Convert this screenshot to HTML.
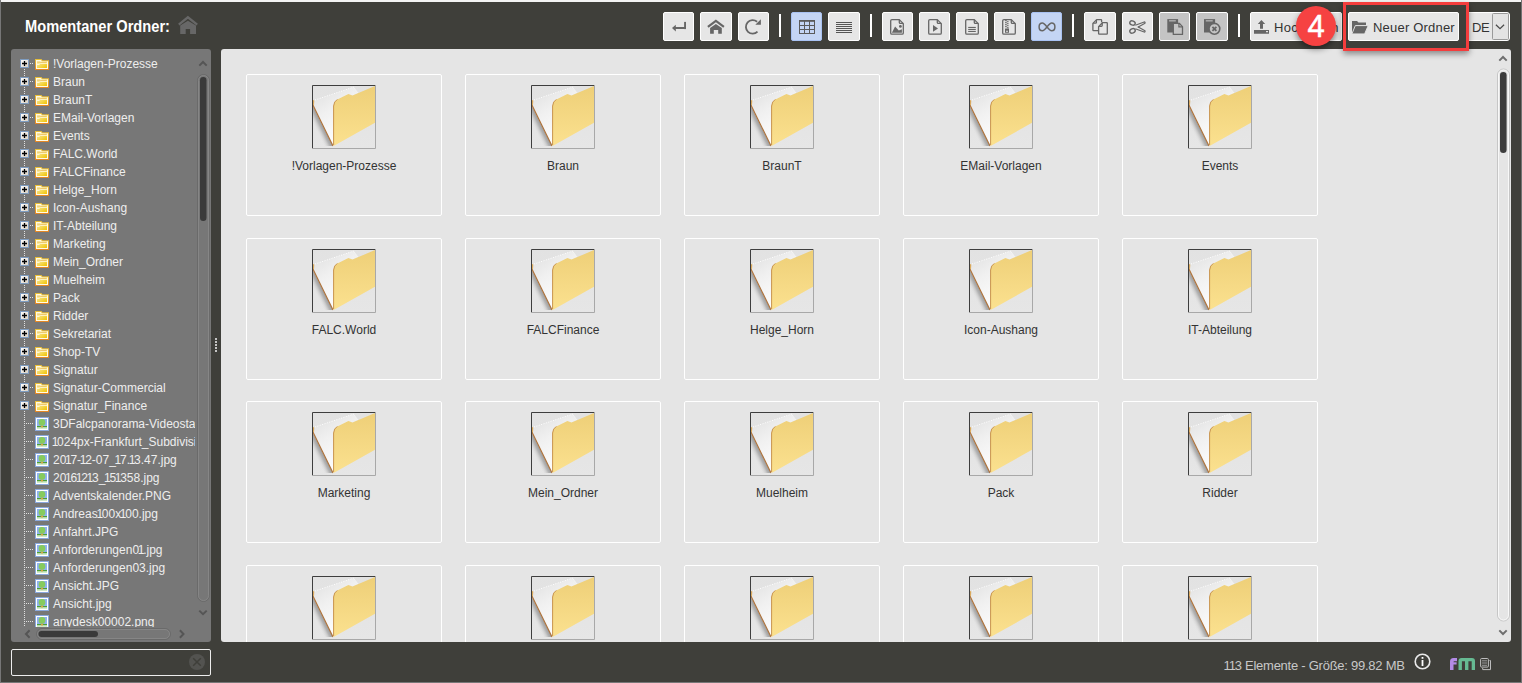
<!DOCTYPE html><html><head><meta charset="utf-8"><style>
*{margin:0;padding:0;box-sizing:border-box}
html,body{width:1522px;height:683px;overflow:hidden;background:#3f3f3a;font-family:"Liberation Sans",sans-serif}
.a{position:absolute}
.btn{position:absolute;top:12px;height:29px;width:31px;background:#e6e6e6;border:1px solid #fff;border-radius:2px}
.btn svg{position:absolute;left:0;top:0}
.on{background:#c4d5f4;border-color:#a9c2f2}
.dis{background:#c4c4c4}
.sep{position:absolute;top:14px;width:2px;height:23px;background:#fff}
.tr{position:absolute;left:53px;font-size:12px;color:#eeeeee;white-space:nowrap;line-height:18px;height:18px}
.item{position:absolute;width:196px;height:142px;border:1px solid #fff;border-radius:2px}
.lbl{position:absolute;left:0;width:194px;top:84px;text-align:center;font-size:12px;color:#333;line-height:14px}
.ico{position:absolute;left:65px;top:10px;width:64px;height:64px}
</style></head><body><svg width="0" height="0" style="position:absolute"><defs>
<linearGradient id="fy" x1="0" y1="0" x2="0" y2="1"><stop offset="0" stop-color="#eecf78"/><stop offset="1" stop-color="#fbe18f"/></linearGradient>
<linearGradient id="fw" x1="0" y1="0" x2="0.5" y2="1"><stop offset="0" stop-color="#dedede"/><stop offset="0.45" stop-color="#f0f0f0"/><stop offset="1" stop-color="#ffffff"/></linearGradient>
<linearGradient id="fsh" gradientUnits="userSpaceOnUse" x1="11" y1="40.5" x2="3.5" y2="44.2"><stop offset="0" stop-color="#999"/><stop offset="0.35" stop-color="#b4b4b4"/><stop offset="1" stop-color="#e4e4e4" stop-opacity="0"/></linearGradient>
<linearGradient id="fbg" x1="0" y1="0" x2="0" y2="1"><stop offset="0" stop-color="#e2e2e2"/><stop offset="1" stop-color="#e6e6e6"/></linearGradient>
<linearGradient id="tfo" x1="0" y1="0" x2="0" y2="1"><stop offset="0" stop-color="#e8c23a"/><stop offset="1" stop-color="#e48424"/></linearGradient>
<linearGradient id="tfi" x1="0" y1="0" x2="1" y2="1"><stop offset="0" stop-color="#faeeb0"/><stop offset="1" stop-color="#f0c400"/></linearGradient>
</defs></svg>
<div class="a" style="left:0;top:0;width:1522px;height:2px;background:#f3f3f3"></div>
<div class="a" style="left:0;top:0;width:1px;height:683px;background:#777"></div>
<div class="a" style="left:1521px;top:0;width:1px;height:683px;background:#727272"></div>
<div class="a" style="left:0;top:682px;width:1522px;height:1px;background:#777"></div>
<div class="a" style="left:24.8px;top:17.3px;font-size:15.8px;font-weight:bold;color:#fff;line-height:20px;white-space:nowrap;transform:scaleX(0.928);transform-origin:0 0">Momentaner Ordner:</div>
<svg class="a" style="left:177px;top:15px" width="22" height="19" viewBox="0 0 22 19"><path d="M1.8 9.6 L10.9 2.3 L20.2 9.6" stroke="#676767" stroke-width="2.3" fill="none"/><path d="M3.2 10.6 L10.9 5.8 L19 10.6 V19 H13.1 V14 H8.7 V19 H3.2 Z" fill="#676767"/></svg>
<div class="btn " style="left:663px;width:31px"></div>
<div class="btn " style="left:700px;width:32px"></div>
<div class="btn " style="left:738px;width:31px"></div>
<div class="sep" style="left:779px"></div>
<div class="btn on" style="left:791px;width:31px"></div>
<div class="btn " style="left:828px;width:32px"></div>
<div class="sep" style="left:870px"></div>
<div class="btn " style="left:882px;width:31px"></div>
<div class="btn " style="left:919px;width:31px"></div>
<div class="btn " style="left:956px;width:32px"></div>
<div class="btn " style="left:994px;width:31px"></div>
<div class="btn on" style="left:1031px;width:31px"></div>
<div class="sep" style="left:1072px"></div>
<div class="btn " style="left:1084px;width:32px"></div>
<div class="btn " style="left:1122px;width:31px"></div>
<div class="btn dis" style="left:1159px;width:31px"></div>
<div class="btn dis" style="left:1196px;width:32px"></div>
<div class="sep" style="left:1238px"></div>
<div class="btn" style="left:1250px;width:92px"></div>
<div class="a" style="left:1274px;top:20px;font-size:13px;color:#333;line-height:15px;letter-spacing:0.3px">Hochladen</div>
<div class="btn" style="left:1348px;width:111px"></div>
<div class="a" style="left:1373px;top:20px;font-size:13px;color:#333;line-height:15px;letter-spacing:0.2px">Neuer Ordner</div>
<div class="btn" style="left:1466px;width:44px;border-radius:3px"></div>
<div class="a" style="left:1472px;top:20px;font-size:13px;color:#333;line-height:15px;letter-spacing:-0.4px">DE</div>
<div class="a" style="left:1492px;top:13px;width:16.5px;height:26.5px;border:1px solid #9a9a9a;border-radius:1.5px;background:#e3e3e3"></div>
<svg class="a" style="left:1495px;top:23px" width="11" height="8" viewBox="0 0 11 8"><path d="M0.9 1.7 L5 5.6 L9.1 1.7" stroke="#4a4a4a" stroke-width="1.2" fill="none"/></svg>
<svg class="a" style="left:0;top:0" width="1522" height="50" viewBox="0 0 1522 50">
<g fill="#666" stroke="none">
<!-- enter -->
<rect x="684.1" y="21.9" width="1.9" height="7.2"/>
<rect x="674.5" y="27" width="11.5" height="2"/>
<path d="M672 28.1 L675.8 24.8 L675.8 31.5 Z"/>
<!-- home -->
<path d="M707.9 26.9 L715.9 20.8 L723.9 26.9" fill="none" stroke="#666" stroke-width="2.1"/>
<path d="M710.1 27.9 L715.9 24.1 L721.8 27.9 L721.8 33.8 L718.2 33.8 L718.2 29.9 L713.8 29.9 L713.8 33.8 L710.1 33.8 Z"/>
<!-- refresh -->
<path d="M757.1 21.7 A6.8 6.8 0 1 0 757.5 31.7" fill="none" stroke="#666" stroke-width="1.8"/>
<path d="M755.3 24.7 L760.9 24.7 L760.9 19.2 Z"/>
<!-- grid -->
<g fill="none" stroke="#5a5a5a" stroke-width="1">
<rect x="799.5" y="20.5" width="15" height="13"/>
<path d="M804.5 21V33M809.5 21V33M800 25.5H814M800 29.5H814"/>
</g>
<rect x="799" y="20" width="16" height="1.8" fill="#5a5a5a"/>
<!-- list -->
<g fill="#555">
<rect x="836" y="22" width="16" height="1"/><rect x="836" y="24" width="16" height="1"/><rect x="836" y="26" width="16" height="1"/><rect x="836" y="28" width="16" height="1"/><rect x="836" y="30" width="16" height="1"/><rect x="836" y="32" width="16" height="1"/>
</g>
</g>
<g fill="none" stroke="#666" stroke-width="1.3" stroke-linejoin="round">
<!-- image doc -->
<path d="M891.9 19.6 H899.3 L903.3 23.6 V33 Q903.3 34.2 902.1 34.2 H891.9 Q890.7 34.2 890.7 33 V20.8 Q890.7 19.6 891.9 19.6 Z"/>
<path d="M899.3 19.8 V22.4 Q899.3 23.4 900.3 23.4 H903.1"/>
<!-- video doc -->
<path d="M929.9 19.6 H937.3 L941.3 23.6 V33 Q941.3 34.2 940.1 34.2 H929.9 Q928.7 34.2 928.7 33 V20.8 Q928.7 19.6 929.9 19.6 Z"/>
<path d="M937.3 19.8 V22.4 Q937.3 23.4 938.3 23.4 H941.1"/>
<!-- text doc -->
<path d="M966.9 19.6 H974.3 L978.3 23.6 V33 Q978.3 34.2 977.1 34.2 H966.9 Q965.7 34.2 965.7 33 V20.8 Q965.7 19.6 966.9 19.6 Z"/>
<path d="M974.3 19.8 V22.4 Q974.3 23.4 975.3 23.4 H978.1"/>
<!-- zip doc -->
<path d="M1003.9 19.6 H1011.3 L1015.3 23.6 V33 Q1015.3 34.2 1014.1 34.2 H1003.9 Q1002.7 34.2 1002.7 33 V20.8 Q1002.7 19.6 1003.9 19.6 Z"/>
<path d="M1011.3 19.8 V22.4 Q1011.3 23.4 1012.3 23.4 H1015.1"/>
<!-- infinity -->
<path d="M1047 26.9 C1045 24.5 1043.8 23.1 1042.4 23.1 C1040.3 23.1 1039.1 24.8 1039.1 26.9 C1039.1 29 1040.3 30.7 1042.4 30.7 C1043.8 30.7 1045 29.3 1047 26.9 C1049 24.5 1050.2 23.1 1051.6 23.1 C1053.7 23.1 1054.9 24.8 1054.9 26.9 C1054.9 29 1053.7 30.7 1051.6 30.7 C1050.2 30.7 1049 29.3 1047 26.9 Z" stroke-width="1.5"/>
<!-- copy -->
<path d="M1101.6 22.2 V20.2 Q1101.6 19.6 1101 19.6 H1096.6 L1092.9 23.4 V30.1 Q1092.9 30.7 1093.5 30.7 H1098"/>
<path d="M1096.4 19.9 V22.4 Q1096.4 23.2 1095.6 23.2 H1093.1"/>
<path d="M1102.4 22.7 H1106.7 Q1107.3 22.7 1107.3 23.3 V33.6 Q1107.3 34.2 1106.7 34.2 H1099.2 Q1098.6 34.2 1098.6 33.6 V26.6 Z"/>
<path d="M1102.2 23 V25.5 Q1102.2 26.3 1101.4 26.3 H1098.9"/>
<!-- scissors -->
<ellipse cx="1132.5" cy="23" rx="2.8" ry="2.1" transform="rotate(22 1132.5 23)" stroke-width="1.4"/>
<ellipse cx="1132.5" cy="30.9" rx="2.8" ry="2.1" transform="rotate(-22 1132.5 30.9)" stroke-width="1.4"/>
<path d="M1135.3 25.3 L1144.2 21.9 Q1145.5 22.2 1145 23.2 L1137.8 27.3" stroke-width="1.1"/>
<path d="M1135.3 28.7 L1144.2 32.1 Q1145.5 31.8 1145 30.8 L1137.8 26.7" stroke-width="1.1"/>
</g>
<g fill="#666">
<!-- image doc details -->
<path d="M891.9 32.8 L895.1 26.5 L898.8 30.6 L901.9 29.2 L901.9 32.8 Z"/>
<circle cx="900.4" cy="26.4" r="1.4"/>
<!-- play -->
<path d="M933 25.1 L933 31.8 L938 28.4 Z"/>
<!-- text lines -->
<rect x="968.2" y="26.9" width="7.6" height="1.1"/><rect x="968.2" y="28.9" width="7.6" height="1.1"/><rect x="968.2" y="30.9" width="7.6" height="1.1"/>
<!-- zipper -->
<rect x="1005" y="20.2" width="1.8" height="1"/><rect x="1006.8" y="21.2" width="1.8" height="1"/><rect x="1005" y="22.2" width="1.8" height="1"/><rect x="1006.8" y="23.2" width="1.8" height="1"/><rect x="1005" y="24.2" width="1.8" height="1"/><rect x="1006.8" y="25.2" width="1.8" height="1"/><rect x="1005" y="26.2" width="1.8" height="1"/><rect x="1006.8" y="27.2" width="1.8" height="1"/>
<path d="M1005 28.4 H1009 V32.7 H1005 Z M1006 30.8 V31.8 H1008 V30.8 Z" fill-rule="evenodd"/>
<!-- paste -->
<rect x="1167.3" y="19.1" width="10.8" height="13.4"/>
<rect x="1169.1" y="20.3" width="6.7" height="1.1" fill="#c4c4c4"/>
<path d="M1173.3 23.3 H1179.2 L1182.5 26.6 V34.4 H1173.3 Z" fill="#c4c4c4" stroke="#666" stroke-width="1.3" stroke-linejoin="round"/>
<path d="M1178.9 23.5 V26.9 H1182.3" fill="none" stroke="#666" stroke-width="1.2"/>
<!-- clear -->
<rect x="1204" y="19.1" width="11.1" height="13.4"/>
<rect x="1205.8" y="20.3" width="6.9" height="1.1" fill="#c4c4c4"/>
<circle cx="1214.4" cy="28.8" r="5.4" fill="#c4c4c4" stroke="#666" stroke-width="1.6"/>
<path d="M1212.4 26.8 L1216.4 30.8 M1216.4 26.8 L1212.4 30.8" stroke="#666" stroke-width="1.8"/>
<!-- upload -->
<path d="M1261.4 19.9 L1265.2 23.9 L1263 23.9 L1263 28.7 L1260 28.7 L1260 23.9 L1257.8 23.9 Z"/>
<path d="M1254 30 H1269 V33.7 H1254 Z M1266 31.1 V32.2 H1268 V31.1 Z" fill-rule="evenodd"/>
<!-- new folder -->
<path d="M1352 21 H1357 L1358.5 22.5 H1366 V25 H1356 L1352 33.8 Z"/>
<path d="M1355.3 25.6 H1368.2 L1364.6 33.9 H1351.9 Z" stroke="#e6e6e6" stroke-width="0.9"/>
</g>
</svg>
<div class="a" style="left:11px;top:49px;width:200px;height:593px;background:#777;border-radius:3px"></div>
<div class="a" style="left:0;top:0;width:195px;height:627px;overflow:hidden"><svg class="a" style="left:20px;top:59px" width="9" height="9" viewBox="0 0 9 9"><defs><linearGradient id="pg" x1="0" y1="0" x2="1" y2="1"><stop offset="0" stop-color="#fff"/><stop offset="1" stop-color="#d9cfc0"/></linearGradient></defs><rect x="0.5" y="0.5" width="8" height="8" fill="url(#pg)" stroke="#7e9cc0"/><path d="M2 4.5H7M4.5 2V7" stroke="#000" stroke-width="1.3"/></svg><svg class="a" style="left:35px;top:59px" width="14" height="11" viewBox="0 0 14 11"><path d="M0 0 H6.5 L7.5 1.3 H14 V11 H0 Z" fill="url(#tfo)"/><path d="M1 1 H6 L7 2.3 H13 V10 H1 Z" fill="#fffbe6"/><rect x="2" y="2.5" width="10" height="6.5" fill="url(#tfi)"/><path d="M2 5.3 H4.2 L5.4 4.2 H12" stroke="#fffdf0" stroke-width="1" fill="none"/><path d="M2 3.1 H4.8 L5.6 3.5 H11.5" stroke="#ecc060" stroke-width="0.8" fill="none"/></svg><div class="tr" style="top:54.5px">!Vorlagen-Prozesse</div><svg class="a" style="left:20px;top:77px" width="9" height="9" viewBox="0 0 9 9"><defs><linearGradient id="pg" x1="0" y1="0" x2="1" y2="1"><stop offset="0" stop-color="#fff"/><stop offset="1" stop-color="#d9cfc0"/></linearGradient></defs><rect x="0.5" y="0.5" width="8" height="8" fill="url(#pg)" stroke="#7e9cc0"/><path d="M2 4.5H7M4.5 2V7" stroke="#000" stroke-width="1.3"/></svg><svg class="a" style="left:35px;top:77px" width="14" height="11" viewBox="0 0 14 11"><path d="M0 0 H6.5 L7.5 1.3 H14 V11 H0 Z" fill="url(#tfo)"/><path d="M1 1 H6 L7 2.3 H13 V10 H1 Z" fill="#fffbe6"/><rect x="2" y="2.5" width="10" height="6.5" fill="url(#tfi)"/><path d="M2 5.3 H4.2 L5.4 4.2 H12" stroke="#fffdf0" stroke-width="1" fill="none"/><path d="M2 3.1 H4.8 L5.6 3.5 H11.5" stroke="#ecc060" stroke-width="0.8" fill="none"/></svg><div class="tr" style="top:72.5px">Braun</div><svg class="a" style="left:20px;top:95px" width="9" height="9" viewBox="0 0 9 9"><defs><linearGradient id="pg" x1="0" y1="0" x2="1" y2="1"><stop offset="0" stop-color="#fff"/><stop offset="1" stop-color="#d9cfc0"/></linearGradient></defs><rect x="0.5" y="0.5" width="8" height="8" fill="url(#pg)" stroke="#7e9cc0"/><path d="M2 4.5H7M4.5 2V7" stroke="#000" stroke-width="1.3"/></svg><svg class="a" style="left:35px;top:95px" width="14" height="11" viewBox="0 0 14 11"><path d="M0 0 H6.5 L7.5 1.3 H14 V11 H0 Z" fill="url(#tfo)"/><path d="M1 1 H6 L7 2.3 H13 V10 H1 Z" fill="#fffbe6"/><rect x="2" y="2.5" width="10" height="6.5" fill="url(#tfi)"/><path d="M2 5.3 H4.2 L5.4 4.2 H12" stroke="#fffdf0" stroke-width="1" fill="none"/><path d="M2 3.1 H4.8 L5.6 3.5 H11.5" stroke="#ecc060" stroke-width="0.8" fill="none"/></svg><div class="tr" style="top:90.5px">BraunT</div><svg class="a" style="left:20px;top:113px" width="9" height="9" viewBox="0 0 9 9"><defs><linearGradient id="pg" x1="0" y1="0" x2="1" y2="1"><stop offset="0" stop-color="#fff"/><stop offset="1" stop-color="#d9cfc0"/></linearGradient></defs><rect x="0.5" y="0.5" width="8" height="8" fill="url(#pg)" stroke="#7e9cc0"/><path d="M2 4.5H7M4.5 2V7" stroke="#000" stroke-width="1.3"/></svg><svg class="a" style="left:35px;top:113px" width="14" height="11" viewBox="0 0 14 11"><path d="M0 0 H6.5 L7.5 1.3 H14 V11 H0 Z" fill="url(#tfo)"/><path d="M1 1 H6 L7 2.3 H13 V10 H1 Z" fill="#fffbe6"/><rect x="2" y="2.5" width="10" height="6.5" fill="url(#tfi)"/><path d="M2 5.3 H4.2 L5.4 4.2 H12" stroke="#fffdf0" stroke-width="1" fill="none"/><path d="M2 3.1 H4.8 L5.6 3.5 H11.5" stroke="#ecc060" stroke-width="0.8" fill="none"/></svg><div class="tr" style="top:108.5px">EMail-Vorlagen</div><svg class="a" style="left:20px;top:131px" width="9" height="9" viewBox="0 0 9 9"><defs><linearGradient id="pg" x1="0" y1="0" x2="1" y2="1"><stop offset="0" stop-color="#fff"/><stop offset="1" stop-color="#d9cfc0"/></linearGradient></defs><rect x="0.5" y="0.5" width="8" height="8" fill="url(#pg)" stroke="#7e9cc0"/><path d="M2 4.5H7M4.5 2V7" stroke="#000" stroke-width="1.3"/></svg><svg class="a" style="left:35px;top:131px" width="14" height="11" viewBox="0 0 14 11"><path d="M0 0 H6.5 L7.5 1.3 H14 V11 H0 Z" fill="url(#tfo)"/><path d="M1 1 H6 L7 2.3 H13 V10 H1 Z" fill="#fffbe6"/><rect x="2" y="2.5" width="10" height="6.5" fill="url(#tfi)"/><path d="M2 5.3 H4.2 L5.4 4.2 H12" stroke="#fffdf0" stroke-width="1" fill="none"/><path d="M2 3.1 H4.8 L5.6 3.5 H11.5" stroke="#ecc060" stroke-width="0.8" fill="none"/></svg><div class="tr" style="top:126.5px">Events</div><svg class="a" style="left:20px;top:149px" width="9" height="9" viewBox="0 0 9 9"><defs><linearGradient id="pg" x1="0" y1="0" x2="1" y2="1"><stop offset="0" stop-color="#fff"/><stop offset="1" stop-color="#d9cfc0"/></linearGradient></defs><rect x="0.5" y="0.5" width="8" height="8" fill="url(#pg)" stroke="#7e9cc0"/><path d="M2 4.5H7M4.5 2V7" stroke="#000" stroke-width="1.3"/></svg><svg class="a" style="left:35px;top:149px" width="14" height="11" viewBox="0 0 14 11"><path d="M0 0 H6.5 L7.5 1.3 H14 V11 H0 Z" fill="url(#tfo)"/><path d="M1 1 H6 L7 2.3 H13 V10 H1 Z" fill="#fffbe6"/><rect x="2" y="2.5" width="10" height="6.5" fill="url(#tfi)"/><path d="M2 5.3 H4.2 L5.4 4.2 H12" stroke="#fffdf0" stroke-width="1" fill="none"/><path d="M2 3.1 H4.8 L5.6 3.5 H11.5" stroke="#ecc060" stroke-width="0.8" fill="none"/></svg><div class="tr" style="top:144.5px">FALC.World</div><svg class="a" style="left:20px;top:167px" width="9" height="9" viewBox="0 0 9 9"><defs><linearGradient id="pg" x1="0" y1="0" x2="1" y2="1"><stop offset="0" stop-color="#fff"/><stop offset="1" stop-color="#d9cfc0"/></linearGradient></defs><rect x="0.5" y="0.5" width="8" height="8" fill="url(#pg)" stroke="#7e9cc0"/><path d="M2 4.5H7M4.5 2V7" stroke="#000" stroke-width="1.3"/></svg><svg class="a" style="left:35px;top:167px" width="14" height="11" viewBox="0 0 14 11"><path d="M0 0 H6.5 L7.5 1.3 H14 V11 H0 Z" fill="url(#tfo)"/><path d="M1 1 H6 L7 2.3 H13 V10 H1 Z" fill="#fffbe6"/><rect x="2" y="2.5" width="10" height="6.5" fill="url(#tfi)"/><path d="M2 5.3 H4.2 L5.4 4.2 H12" stroke="#fffdf0" stroke-width="1" fill="none"/><path d="M2 3.1 H4.8 L5.6 3.5 H11.5" stroke="#ecc060" stroke-width="0.8" fill="none"/></svg><div class="tr" style="top:162.5px">FALCFinance</div><svg class="a" style="left:20px;top:185px" width="9" height="9" viewBox="0 0 9 9"><defs><linearGradient id="pg" x1="0" y1="0" x2="1" y2="1"><stop offset="0" stop-color="#fff"/><stop offset="1" stop-color="#d9cfc0"/></linearGradient></defs><rect x="0.5" y="0.5" width="8" height="8" fill="url(#pg)" stroke="#7e9cc0"/><path d="M2 4.5H7M4.5 2V7" stroke="#000" stroke-width="1.3"/></svg><svg class="a" style="left:35px;top:185px" width="14" height="11" viewBox="0 0 14 11"><path d="M0 0 H6.5 L7.5 1.3 H14 V11 H0 Z" fill="url(#tfo)"/><path d="M1 1 H6 L7 2.3 H13 V10 H1 Z" fill="#fffbe6"/><rect x="2" y="2.5" width="10" height="6.5" fill="url(#tfi)"/><path d="M2 5.3 H4.2 L5.4 4.2 H12" stroke="#fffdf0" stroke-width="1" fill="none"/><path d="M2 3.1 H4.8 L5.6 3.5 H11.5" stroke="#ecc060" stroke-width="0.8" fill="none"/></svg><div class="tr" style="top:180.5px">Helge_Horn</div><svg class="a" style="left:20px;top:203px" width="9" height="9" viewBox="0 0 9 9"><defs><linearGradient id="pg" x1="0" y1="0" x2="1" y2="1"><stop offset="0" stop-color="#fff"/><stop offset="1" stop-color="#d9cfc0"/></linearGradient></defs><rect x="0.5" y="0.5" width="8" height="8" fill="url(#pg)" stroke="#7e9cc0"/><path d="M2 4.5H7M4.5 2V7" stroke="#000" stroke-width="1.3"/></svg><svg class="a" style="left:35px;top:203px" width="14" height="11" viewBox="0 0 14 11"><path d="M0 0 H6.5 L7.5 1.3 H14 V11 H0 Z" fill="url(#tfo)"/><path d="M1 1 H6 L7 2.3 H13 V10 H1 Z" fill="#fffbe6"/><rect x="2" y="2.5" width="10" height="6.5" fill="url(#tfi)"/><path d="M2 5.3 H4.2 L5.4 4.2 H12" stroke="#fffdf0" stroke-width="1" fill="none"/><path d="M2 3.1 H4.8 L5.6 3.5 H11.5" stroke="#ecc060" stroke-width="0.8" fill="none"/></svg><div class="tr" style="top:198.5px">Icon-Aushang</div><svg class="a" style="left:20px;top:221px" width="9" height="9" viewBox="0 0 9 9"><defs><linearGradient id="pg" x1="0" y1="0" x2="1" y2="1"><stop offset="0" stop-color="#fff"/><stop offset="1" stop-color="#d9cfc0"/></linearGradient></defs><rect x="0.5" y="0.5" width="8" height="8" fill="url(#pg)" stroke="#7e9cc0"/><path d="M2 4.5H7M4.5 2V7" stroke="#000" stroke-width="1.3"/></svg><svg class="a" style="left:35px;top:221px" width="14" height="11" viewBox="0 0 14 11"><path d="M0 0 H6.5 L7.5 1.3 H14 V11 H0 Z" fill="url(#tfo)"/><path d="M1 1 H6 L7 2.3 H13 V10 H1 Z" fill="#fffbe6"/><rect x="2" y="2.5" width="10" height="6.5" fill="url(#tfi)"/><path d="M2 5.3 H4.2 L5.4 4.2 H12" stroke="#fffdf0" stroke-width="1" fill="none"/><path d="M2 3.1 H4.8 L5.6 3.5 H11.5" stroke="#ecc060" stroke-width="0.8" fill="none"/></svg><div class="tr" style="top:216.5px">IT-Abteilung</div><svg class="a" style="left:20px;top:239px" width="9" height="9" viewBox="0 0 9 9"><defs><linearGradient id="pg" x1="0" y1="0" x2="1" y2="1"><stop offset="0" stop-color="#fff"/><stop offset="1" stop-color="#d9cfc0"/></linearGradient></defs><rect x="0.5" y="0.5" width="8" height="8" fill="url(#pg)" stroke="#7e9cc0"/><path d="M2 4.5H7M4.5 2V7" stroke="#000" stroke-width="1.3"/></svg><svg class="a" style="left:35px;top:239px" width="14" height="11" viewBox="0 0 14 11"><path d="M0 0 H6.5 L7.5 1.3 H14 V11 H0 Z" fill="url(#tfo)"/><path d="M1 1 H6 L7 2.3 H13 V10 H1 Z" fill="#fffbe6"/><rect x="2" y="2.5" width="10" height="6.5" fill="url(#tfi)"/><path d="M2 5.3 H4.2 L5.4 4.2 H12" stroke="#fffdf0" stroke-width="1" fill="none"/><path d="M2 3.1 H4.8 L5.6 3.5 H11.5" stroke="#ecc060" stroke-width="0.8" fill="none"/></svg><div class="tr" style="top:234.5px">Marketing</div><svg class="a" style="left:20px;top:257px" width="9" height="9" viewBox="0 0 9 9"><defs><linearGradient id="pg" x1="0" y1="0" x2="1" y2="1"><stop offset="0" stop-color="#fff"/><stop offset="1" stop-color="#d9cfc0"/></linearGradient></defs><rect x="0.5" y="0.5" width="8" height="8" fill="url(#pg)" stroke="#7e9cc0"/><path d="M2 4.5H7M4.5 2V7" stroke="#000" stroke-width="1.3"/></svg><svg class="a" style="left:35px;top:257px" width="14" height="11" viewBox="0 0 14 11"><path d="M0 0 H6.5 L7.5 1.3 H14 V11 H0 Z" fill="url(#tfo)"/><path d="M1 1 H6 L7 2.3 H13 V10 H1 Z" fill="#fffbe6"/><rect x="2" y="2.5" width="10" height="6.5" fill="url(#tfi)"/><path d="M2 5.3 H4.2 L5.4 4.2 H12" stroke="#fffdf0" stroke-width="1" fill="none"/><path d="M2 3.1 H4.8 L5.6 3.5 H11.5" stroke="#ecc060" stroke-width="0.8" fill="none"/></svg><div class="tr" style="top:252.5px">Mein_Ordner</div><svg class="a" style="left:20px;top:275px" width="9" height="9" viewBox="0 0 9 9"><defs><linearGradient id="pg" x1="0" y1="0" x2="1" y2="1"><stop offset="0" stop-color="#fff"/><stop offset="1" stop-color="#d9cfc0"/></linearGradient></defs><rect x="0.5" y="0.5" width="8" height="8" fill="url(#pg)" stroke="#7e9cc0"/><path d="M2 4.5H7M4.5 2V7" stroke="#000" stroke-width="1.3"/></svg><svg class="a" style="left:35px;top:275px" width="14" height="11" viewBox="0 0 14 11"><path d="M0 0 H6.5 L7.5 1.3 H14 V11 H0 Z" fill="url(#tfo)"/><path d="M1 1 H6 L7 2.3 H13 V10 H1 Z" fill="#fffbe6"/><rect x="2" y="2.5" width="10" height="6.5" fill="url(#tfi)"/><path d="M2 5.3 H4.2 L5.4 4.2 H12" stroke="#fffdf0" stroke-width="1" fill="none"/><path d="M2 3.1 H4.8 L5.6 3.5 H11.5" stroke="#ecc060" stroke-width="0.8" fill="none"/></svg><div class="tr" style="top:270.5px">Muelheim</div><svg class="a" style="left:20px;top:293px" width="9" height="9" viewBox="0 0 9 9"><defs><linearGradient id="pg" x1="0" y1="0" x2="1" y2="1"><stop offset="0" stop-color="#fff"/><stop offset="1" stop-color="#d9cfc0"/></linearGradient></defs><rect x="0.5" y="0.5" width="8" height="8" fill="url(#pg)" stroke="#7e9cc0"/><path d="M2 4.5H7M4.5 2V7" stroke="#000" stroke-width="1.3"/></svg><svg class="a" style="left:35px;top:293px" width="14" height="11" viewBox="0 0 14 11"><path d="M0 0 H6.5 L7.5 1.3 H14 V11 H0 Z" fill="url(#tfo)"/><path d="M1 1 H6 L7 2.3 H13 V10 H1 Z" fill="#fffbe6"/><rect x="2" y="2.5" width="10" height="6.5" fill="url(#tfi)"/><path d="M2 5.3 H4.2 L5.4 4.2 H12" stroke="#fffdf0" stroke-width="1" fill="none"/><path d="M2 3.1 H4.8 L5.6 3.5 H11.5" stroke="#ecc060" stroke-width="0.8" fill="none"/></svg><div class="tr" style="top:288.5px">Pack</div><svg class="a" style="left:20px;top:311px" width="9" height="9" viewBox="0 0 9 9"><defs><linearGradient id="pg" x1="0" y1="0" x2="1" y2="1"><stop offset="0" stop-color="#fff"/><stop offset="1" stop-color="#d9cfc0"/></linearGradient></defs><rect x="0.5" y="0.5" width="8" height="8" fill="url(#pg)" stroke="#7e9cc0"/><path d="M2 4.5H7M4.5 2V7" stroke="#000" stroke-width="1.3"/></svg><svg class="a" style="left:35px;top:311px" width="14" height="11" viewBox="0 0 14 11"><path d="M0 0 H6.5 L7.5 1.3 H14 V11 H0 Z" fill="url(#tfo)"/><path d="M1 1 H6 L7 2.3 H13 V10 H1 Z" fill="#fffbe6"/><rect x="2" y="2.5" width="10" height="6.5" fill="url(#tfi)"/><path d="M2 5.3 H4.2 L5.4 4.2 H12" stroke="#fffdf0" stroke-width="1" fill="none"/><path d="M2 3.1 H4.8 L5.6 3.5 H11.5" stroke="#ecc060" stroke-width="0.8" fill="none"/></svg><div class="tr" style="top:306.5px">Ridder</div><svg class="a" style="left:20px;top:329px" width="9" height="9" viewBox="0 0 9 9"><defs><linearGradient id="pg" x1="0" y1="0" x2="1" y2="1"><stop offset="0" stop-color="#fff"/><stop offset="1" stop-color="#d9cfc0"/></linearGradient></defs><rect x="0.5" y="0.5" width="8" height="8" fill="url(#pg)" stroke="#7e9cc0"/><path d="M2 4.5H7M4.5 2V7" stroke="#000" stroke-width="1.3"/></svg><svg class="a" style="left:35px;top:329px" width="14" height="11" viewBox="0 0 14 11"><path d="M0 0 H6.5 L7.5 1.3 H14 V11 H0 Z" fill="url(#tfo)"/><path d="M1 1 H6 L7 2.3 H13 V10 H1 Z" fill="#fffbe6"/><rect x="2" y="2.5" width="10" height="6.5" fill="url(#tfi)"/><path d="M2 5.3 H4.2 L5.4 4.2 H12" stroke="#fffdf0" stroke-width="1" fill="none"/><path d="M2 3.1 H4.8 L5.6 3.5 H11.5" stroke="#ecc060" stroke-width="0.8" fill="none"/></svg><div class="tr" style="top:324.5px">Sekretariat</div><svg class="a" style="left:20px;top:347px" width="9" height="9" viewBox="0 0 9 9"><defs><linearGradient id="pg" x1="0" y1="0" x2="1" y2="1"><stop offset="0" stop-color="#fff"/><stop offset="1" stop-color="#d9cfc0"/></linearGradient></defs><rect x="0.5" y="0.5" width="8" height="8" fill="url(#pg)" stroke="#7e9cc0"/><path d="M2 4.5H7M4.5 2V7" stroke="#000" stroke-width="1.3"/></svg><svg class="a" style="left:35px;top:347px" width="14" height="11" viewBox="0 0 14 11"><path d="M0 0 H6.5 L7.5 1.3 H14 V11 H0 Z" fill="url(#tfo)"/><path d="M1 1 H6 L7 2.3 H13 V10 H1 Z" fill="#fffbe6"/><rect x="2" y="2.5" width="10" height="6.5" fill="url(#tfi)"/><path d="M2 5.3 H4.2 L5.4 4.2 H12" stroke="#fffdf0" stroke-width="1" fill="none"/><path d="M2 3.1 H4.8 L5.6 3.5 H11.5" stroke="#ecc060" stroke-width="0.8" fill="none"/></svg><div class="tr" style="top:342.5px">Shop-TV</div><svg class="a" style="left:20px;top:365px" width="9" height="9" viewBox="0 0 9 9"><defs><linearGradient id="pg" x1="0" y1="0" x2="1" y2="1"><stop offset="0" stop-color="#fff"/><stop offset="1" stop-color="#d9cfc0"/></linearGradient></defs><rect x="0.5" y="0.5" width="8" height="8" fill="url(#pg)" stroke="#7e9cc0"/><path d="M2 4.5H7M4.5 2V7" stroke="#000" stroke-width="1.3"/></svg><svg class="a" style="left:35px;top:365px" width="14" height="11" viewBox="0 0 14 11"><path d="M0 0 H6.5 L7.5 1.3 H14 V11 H0 Z" fill="url(#tfo)"/><path d="M1 1 H6 L7 2.3 H13 V10 H1 Z" fill="#fffbe6"/><rect x="2" y="2.5" width="10" height="6.5" fill="url(#tfi)"/><path d="M2 5.3 H4.2 L5.4 4.2 H12" stroke="#fffdf0" stroke-width="1" fill="none"/><path d="M2 3.1 H4.8 L5.6 3.5 H11.5" stroke="#ecc060" stroke-width="0.8" fill="none"/></svg><div class="tr" style="top:360.5px">Signatur</div><svg class="a" style="left:20px;top:383px" width="9" height="9" viewBox="0 0 9 9"><defs><linearGradient id="pg" x1="0" y1="0" x2="1" y2="1"><stop offset="0" stop-color="#fff"/><stop offset="1" stop-color="#d9cfc0"/></linearGradient></defs><rect x="0.5" y="0.5" width="8" height="8" fill="url(#pg)" stroke="#7e9cc0"/><path d="M2 4.5H7M4.5 2V7" stroke="#000" stroke-width="1.3"/></svg><svg class="a" style="left:35px;top:383px" width="14" height="11" viewBox="0 0 14 11"><path d="M0 0 H6.5 L7.5 1.3 H14 V11 H0 Z" fill="url(#tfo)"/><path d="M1 1 H6 L7 2.3 H13 V10 H1 Z" fill="#fffbe6"/><rect x="2" y="2.5" width="10" height="6.5" fill="url(#tfi)"/><path d="M2 5.3 H4.2 L5.4 4.2 H12" stroke="#fffdf0" stroke-width="1" fill="none"/><path d="M2 3.1 H4.8 L5.6 3.5 H11.5" stroke="#ecc060" stroke-width="0.8" fill="none"/></svg><div class="tr" style="top:378.5px">Signatur-Commercial</div><svg class="a" style="left:20px;top:401px" width="9" height="9" viewBox="0 0 9 9"><defs><linearGradient id="pg" x1="0" y1="0" x2="1" y2="1"><stop offset="0" stop-color="#fff"/><stop offset="1" stop-color="#d9cfc0"/></linearGradient></defs><rect x="0.5" y="0.5" width="8" height="8" fill="url(#pg)" stroke="#7e9cc0"/><path d="M2 4.5H7M4.5 2V7" stroke="#000" stroke-width="1.3"/></svg><svg class="a" style="left:35px;top:401px" width="14" height="11" viewBox="0 0 14 11"><path d="M0 0 H6.5 L7.5 1.3 H14 V11 H0 Z" fill="url(#tfo)"/><path d="M1 1 H6 L7 2.3 H13 V10 H1 Z" fill="#fffbe6"/><rect x="2" y="2.5" width="10" height="6.5" fill="url(#tfi)"/><path d="M2 5.3 H4.2 L5.4 4.2 H12" stroke="#fffdf0" stroke-width="1" fill="none"/><path d="M2 3.1 H4.8 L5.6 3.5 H11.5" stroke="#ecc060" stroke-width="0.8" fill="none"/></svg><div class="tr" style="top:396.5px">Signatur_Finance</div><svg class="a" style="left:35px;top:417px" width="14" height="14" viewBox="0 0 14 14"><rect x="0.5" y="0.5" width="13" height="13" fill="#fff" stroke="#8aa8dc"/><rect x="2" y="2" width="10" height="7.5" fill="#8fb2ee"/><rect x="2" y="10" width="10" height="2" fill="#cfe9c8"/><rect x="2" y="9" width="10" height="1.2" fill="#4c9e36"/><path d="M5.5 8.6 H8.5 L7 11.2 Z" fill="#e4a048"/><circle cx="7" cy="5.4" r="3.3" fill="#86cb5e"/></svg><div class="tr" style="top:414.5px">3DFalcpanorama-Videostandbild.jpg</div><svg class="a" style="left:35px;top:435px" width="14" height="14" viewBox="0 0 14 14"><rect x="0.5" y="0.5" width="13" height="13" fill="#fff" stroke="#8aa8dc"/><rect x="2" y="2" width="10" height="7.5" fill="#8fb2ee"/><rect x="2" y="10" width="10" height="2" fill="#cfe9c8"/><rect x="2" y="9" width="10" height="1.2" fill="#4c9e36"/><path d="M5.5 8.6 H8.5 L7 11.2 Z" fill="#e4a048"/><circle cx="7" cy="5.4" r="3.3" fill="#86cb5e"/></svg><div class="tr" style="top:432.5px"><span style="margin-left:-1.3px;letter-spacing:-1.3px">1</span>024px-Frankfurt_Subdivision.jpg</div><svg class="a" style="left:35px;top:453px" width="14" height="14" viewBox="0 0 14 14"><rect x="0.5" y="0.5" width="13" height="13" fill="#fff" stroke="#8aa8dc"/><rect x="2" y="2" width="10" height="7.5" fill="#8fb2ee"/><rect x="2" y="10" width="10" height="2" fill="#cfe9c8"/><rect x="2" y="9" width="10" height="1.2" fill="#4c9e36"/><path d="M5.5 8.6 H8.5 L7 11.2 Z" fill="#e4a048"/><circle cx="7" cy="5.4" r="3.3" fill="#86cb5e"/></svg><div class="tr" style="top:450.5px">20<span style="margin-left:-1.3px;letter-spacing:-1.3px">1</span>7-<span style="margin-left:-1.3px;letter-spacing:-1.3px">1</span>2-07_<span style="margin-left:-1.3px;letter-spacing:-1.3px">1</span>7.<span style="margin-left:-1.3px;letter-spacing:-1.3px">1</span>3.47.jpg</div><svg class="a" style="left:35px;top:471px" width="14" height="14" viewBox="0 0 14 14"><rect x="0.5" y="0.5" width="13" height="13" fill="#fff" stroke="#8aa8dc"/><rect x="2" y="2" width="10" height="7.5" fill="#8fb2ee"/><rect x="2" y="10" width="10" height="2" fill="#cfe9c8"/><rect x="2" y="9" width="10" height="1.2" fill="#4c9e36"/><path d="M5.5 8.6 H8.5 L7 11.2 Z" fill="#e4a048"/><circle cx="7" cy="5.4" r="3.3" fill="#86cb5e"/></svg><div class="tr" style="top:468.5px">20<span style="margin-left:-1.3px;letter-spacing:-1.3px">1</span>6<span style="margin-left:-1.3px;letter-spacing:-1.3px">1</span>2<span style="margin-left:-1.3px;letter-spacing:-1.3px">1</span>3_<span style="margin-left:-1.3px;letter-spacing:-1.3px">1</span>5<span style="margin-left:-1.3px;letter-spacing:-1.3px">1</span>358.jpg</div><svg class="a" style="left:35px;top:489px" width="14" height="14" viewBox="0 0 14 14"><rect x="0.5" y="0.5" width="13" height="13" fill="#fff" stroke="#8aa8dc"/><rect x="2" y="2" width="10" height="7.5" fill="#8fb2ee"/><rect x="2" y="10" width="10" height="2" fill="#cfe9c8"/><rect x="2" y="9" width="10" height="1.2" fill="#4c9e36"/><path d="M5.5 8.6 H8.5 L7 11.2 Z" fill="#e4a048"/><circle cx="7" cy="5.4" r="3.3" fill="#86cb5e"/></svg><div class="tr" style="top:486.5px">Adventskalender.PNG</div><svg class="a" style="left:35px;top:507px" width="14" height="14" viewBox="0 0 14 14"><rect x="0.5" y="0.5" width="13" height="13" fill="#fff" stroke="#8aa8dc"/><rect x="2" y="2" width="10" height="7.5" fill="#8fb2ee"/><rect x="2" y="10" width="10" height="2" fill="#cfe9c8"/><rect x="2" y="9" width="10" height="1.2" fill="#4c9e36"/><path d="M5.5 8.6 H8.5 L7 11.2 Z" fill="#e4a048"/><circle cx="7" cy="5.4" r="3.3" fill="#86cb5e"/></svg><div class="tr" style="top:504.5px">Andreas<span style="margin-left:-1.3px;letter-spacing:-1.3px">1</span>00x<span style="margin-left:-1.3px;letter-spacing:-1.3px">1</span>00.jpg</div><svg class="a" style="left:35px;top:525px" width="14" height="14" viewBox="0 0 14 14"><rect x="0.5" y="0.5" width="13" height="13" fill="#fff" stroke="#8aa8dc"/><rect x="2" y="2" width="10" height="7.5" fill="#8fb2ee"/><rect x="2" y="10" width="10" height="2" fill="#cfe9c8"/><rect x="2" y="9" width="10" height="1.2" fill="#4c9e36"/><path d="M5.5 8.6 H8.5 L7 11.2 Z" fill="#e4a048"/><circle cx="7" cy="5.4" r="3.3" fill="#86cb5e"/></svg><div class="tr" style="top:522.5px">Anfahrt.JPG</div><svg class="a" style="left:35px;top:543px" width="14" height="14" viewBox="0 0 14 14"><rect x="0.5" y="0.5" width="13" height="13" fill="#fff" stroke="#8aa8dc"/><rect x="2" y="2" width="10" height="7.5" fill="#8fb2ee"/><rect x="2" y="10" width="10" height="2" fill="#cfe9c8"/><rect x="2" y="9" width="10" height="1.2" fill="#4c9e36"/><path d="M5.5 8.6 H8.5 L7 11.2 Z" fill="#e4a048"/><circle cx="7" cy="5.4" r="3.3" fill="#86cb5e"/></svg><div class="tr" style="top:540.5px">Anforderungen0<span style="margin-left:-1.3px;letter-spacing:-1.3px">1</span>.jpg</div><svg class="a" style="left:35px;top:561px" width="14" height="14" viewBox="0 0 14 14"><rect x="0.5" y="0.5" width="13" height="13" fill="#fff" stroke="#8aa8dc"/><rect x="2" y="2" width="10" height="7.5" fill="#8fb2ee"/><rect x="2" y="10" width="10" height="2" fill="#cfe9c8"/><rect x="2" y="9" width="10" height="1.2" fill="#4c9e36"/><path d="M5.5 8.6 H8.5 L7 11.2 Z" fill="#e4a048"/><circle cx="7" cy="5.4" r="3.3" fill="#86cb5e"/></svg><div class="tr" style="top:558.5px">Anforderungen03.jpg</div><svg class="a" style="left:35px;top:579px" width="14" height="14" viewBox="0 0 14 14"><rect x="0.5" y="0.5" width="13" height="13" fill="#fff" stroke="#8aa8dc"/><rect x="2" y="2" width="10" height="7.5" fill="#8fb2ee"/><rect x="2" y="10" width="10" height="2" fill="#cfe9c8"/><rect x="2" y="9" width="10" height="1.2" fill="#4c9e36"/><path d="M5.5 8.6 H8.5 L7 11.2 Z" fill="#e4a048"/><circle cx="7" cy="5.4" r="3.3" fill="#86cb5e"/></svg><div class="tr" style="top:576.5px">Ansicht.JPG</div><svg class="a" style="left:35px;top:597px" width="14" height="14" viewBox="0 0 14 14"><rect x="0.5" y="0.5" width="13" height="13" fill="#fff" stroke="#8aa8dc"/><rect x="2" y="2" width="10" height="7.5" fill="#8fb2ee"/><rect x="2" y="10" width="10" height="2" fill="#cfe9c8"/><rect x="2" y="9" width="10" height="1.2" fill="#4c9e36"/><path d="M5.5 8.6 H8.5 L7 11.2 Z" fill="#e4a048"/><circle cx="7" cy="5.4" r="3.3" fill="#86cb5e"/></svg><div class="tr" style="top:594.5px">Ansicht.jpg</div><svg class="a" style="left:35px;top:615px" width="14" height="14" viewBox="0 0 14 14"><rect x="0.5" y="0.5" width="13" height="13" fill="#fff" stroke="#8aa8dc"/><rect x="2" y="2" width="10" height="7.5" fill="#8fb2ee"/><rect x="2" y="10" width="10" height="2" fill="#cfe9c8"/><rect x="2" y="9" width="10" height="1.2" fill="#4c9e36"/><path d="M5.5 8.6 H8.5 L7 11.2 Z" fill="#e4a048"/><circle cx="7" cy="5.4" r="3.3" fill="#86cb5e"/></svg><div class="tr" style="top:612.5px">anydesk00002.png</div></div>
<svg class="a" style="left:0;top:0" width="220" height="640" viewBox="0 0 220 640"><g fill="#e0e0e0"><rect x="30" y="63" width="1" height="1"/><rect x="32" y="63" width="1" height="1"/><rect x="30" y="81" width="1" height="1"/><rect x="32" y="81" width="1" height="1"/><rect x="30" y="99" width="1" height="1"/><rect x="32" y="99" width="1" height="1"/><rect x="30" y="117" width="1" height="1"/><rect x="32" y="117" width="1" height="1"/><rect x="30" y="135" width="1" height="1"/><rect x="32" y="135" width="1" height="1"/><rect x="30" y="153" width="1" height="1"/><rect x="32" y="153" width="1" height="1"/><rect x="30" y="171" width="1" height="1"/><rect x="32" y="171" width="1" height="1"/><rect x="30" y="189" width="1" height="1"/><rect x="32" y="189" width="1" height="1"/><rect x="30" y="207" width="1" height="1"/><rect x="32" y="207" width="1" height="1"/><rect x="30" y="225" width="1" height="1"/><rect x="32" y="225" width="1" height="1"/><rect x="30" y="243" width="1" height="1"/><rect x="32" y="243" width="1" height="1"/><rect x="30" y="261" width="1" height="1"/><rect x="32" y="261" width="1" height="1"/><rect x="30" y="279" width="1" height="1"/><rect x="32" y="279" width="1" height="1"/><rect x="30" y="297" width="1" height="1"/><rect x="32" y="297" width="1" height="1"/><rect x="30" y="315" width="1" height="1"/><rect x="32" y="315" width="1" height="1"/><rect x="30" y="333" width="1" height="1"/><rect x="32" y="333" width="1" height="1"/><rect x="30" y="351" width="1" height="1"/><rect x="32" y="351" width="1" height="1"/><rect x="30" y="369" width="1" height="1"/><rect x="32" y="369" width="1" height="1"/><rect x="30" y="387" width="1" height="1"/><rect x="32" y="387" width="1" height="1"/><rect x="30" y="405" width="1" height="1"/><rect x="32" y="405" width="1" height="1"/><rect x="26" y="423" width="1" height="1"/><rect x="28" y="423" width="1" height="1"/><rect x="30" y="423" width="1" height="1"/><rect x="32" y="423" width="1" height="1"/><rect x="26" y="441" width="1" height="1"/><rect x="28" y="441" width="1" height="1"/><rect x="30" y="441" width="1" height="1"/><rect x="32" y="441" width="1" height="1"/><rect x="26" y="459" width="1" height="1"/><rect x="28" y="459" width="1" height="1"/><rect x="30" y="459" width="1" height="1"/><rect x="32" y="459" width="1" height="1"/><rect x="26" y="477" width="1" height="1"/><rect x="28" y="477" width="1" height="1"/><rect x="30" y="477" width="1" height="1"/><rect x="32" y="477" width="1" height="1"/><rect x="26" y="495" width="1" height="1"/><rect x="28" y="495" width="1" height="1"/><rect x="30" y="495" width="1" height="1"/><rect x="32" y="495" width="1" height="1"/><rect x="26" y="513" width="1" height="1"/><rect x="28" y="513" width="1" height="1"/><rect x="30" y="513" width="1" height="1"/><rect x="32" y="513" width="1" height="1"/><rect x="26" y="531" width="1" height="1"/><rect x="28" y="531" width="1" height="1"/><rect x="30" y="531" width="1" height="1"/><rect x="32" y="531" width="1" height="1"/><rect x="26" y="549" width="1" height="1"/><rect x="28" y="549" width="1" height="1"/><rect x="30" y="549" width="1" height="1"/><rect x="32" y="549" width="1" height="1"/><rect x="26" y="567" width="1" height="1"/><rect x="28" y="567" width="1" height="1"/><rect x="30" y="567" width="1" height="1"/><rect x="32" y="567" width="1" height="1"/><rect x="26" y="585" width="1" height="1"/><rect x="28" y="585" width="1" height="1"/><rect x="30" y="585" width="1" height="1"/><rect x="32" y="585" width="1" height="1"/><rect x="26" y="603" width="1" height="1"/><rect x="28" y="603" width="1" height="1"/><rect x="30" y="603" width="1" height="1"/><rect x="32" y="603" width="1" height="1"/><rect x="26" y="621" width="1" height="1"/><rect x="28" y="621" width="1" height="1"/><rect x="30" y="621" width="1" height="1"/><rect x="32" y="621" width="1" height="1"/><rect x="24" y="69" width="1" height="1"/><rect x="24" y="71" width="1" height="1"/><rect x="24" y="73" width="1" height="1"/><rect x="24" y="75" width="1" height="1"/><rect x="24" y="87" width="1" height="1"/><rect x="24" y="89" width="1" height="1"/><rect x="24" y="91" width="1" height="1"/><rect x="24" y="93" width="1" height="1"/><rect x="24" y="105" width="1" height="1"/><rect x="24" y="107" width="1" height="1"/><rect x="24" y="109" width="1" height="1"/><rect x="24" y="111" width="1" height="1"/><rect x="24" y="123" width="1" height="1"/><rect x="24" y="125" width="1" height="1"/><rect x="24" y="127" width="1" height="1"/><rect x="24" y="129" width="1" height="1"/><rect x="24" y="141" width="1" height="1"/><rect x="24" y="143" width="1" height="1"/><rect x="24" y="145" width="1" height="1"/><rect x="24" y="147" width="1" height="1"/><rect x="24" y="159" width="1" height="1"/><rect x="24" y="161" width="1" height="1"/><rect x="24" y="163" width="1" height="1"/><rect x="24" y="165" width="1" height="1"/><rect x="24" y="177" width="1" height="1"/><rect x="24" y="179" width="1" height="1"/><rect x="24" y="181" width="1" height="1"/><rect x="24" y="183" width="1" height="1"/><rect x="24" y="195" width="1" height="1"/><rect x="24" y="197" width="1" height="1"/><rect x="24" y="199" width="1" height="1"/><rect x="24" y="201" width="1" height="1"/><rect x="24" y="213" width="1" height="1"/><rect x="24" y="215" width="1" height="1"/><rect x="24" y="217" width="1" height="1"/><rect x="24" y="219" width="1" height="1"/><rect x="24" y="231" width="1" height="1"/><rect x="24" y="233" width="1" height="1"/><rect x="24" y="235" width="1" height="1"/><rect x="24" y="237" width="1" height="1"/><rect x="24" y="249" width="1" height="1"/><rect x="24" y="251" width="1" height="1"/><rect x="24" y="253" width="1" height="1"/><rect x="24" y="255" width="1" height="1"/><rect x="24" y="267" width="1" height="1"/><rect x="24" y="269" width="1" height="1"/><rect x="24" y="271" width="1" height="1"/><rect x="24" y="273" width="1" height="1"/><rect x="24" y="285" width="1" height="1"/><rect x="24" y="287" width="1" height="1"/><rect x="24" y="289" width="1" height="1"/><rect x="24" y="291" width="1" height="1"/><rect x="24" y="303" width="1" height="1"/><rect x="24" y="305" width="1" height="1"/><rect x="24" y="307" width="1" height="1"/><rect x="24" y="309" width="1" height="1"/><rect x="24" y="321" width="1" height="1"/><rect x="24" y="323" width="1" height="1"/><rect x="24" y="325" width="1" height="1"/><rect x="24" y="327" width="1" height="1"/><rect x="24" y="339" width="1" height="1"/><rect x="24" y="341" width="1" height="1"/><rect x="24" y="343" width="1" height="1"/><rect x="24" y="345" width="1" height="1"/><rect x="24" y="357" width="1" height="1"/><rect x="24" y="359" width="1" height="1"/><rect x="24" y="361" width="1" height="1"/><rect x="24" y="363" width="1" height="1"/><rect x="24" y="375" width="1" height="1"/><rect x="24" y="377" width="1" height="1"/><rect x="24" y="379" width="1" height="1"/><rect x="24" y="381" width="1" height="1"/><rect x="24" y="393" width="1" height="1"/><rect x="24" y="395" width="1" height="1"/><rect x="24" y="397" width="1" height="1"/><rect x="24" y="399" width="1" height="1"/><rect x="24" y="411" width="1" height="1"/><rect x="24" y="413" width="1" height="1"/><rect x="24" y="415" width="1" height="1"/><rect x="24" y="417" width="1" height="1"/><rect x="24" y="419" width="1" height="1"/><rect x="24" y="421" width="1" height="1"/><rect x="24" y="423" width="1" height="1"/><rect x="24" y="425" width="1" height="1"/><rect x="24" y="427" width="1" height="1"/><rect x="24" y="429" width="1" height="1"/><rect x="24" y="431" width="1" height="1"/><rect x="24" y="433" width="1" height="1"/><rect x="24" y="435" width="1" height="1"/><rect x="24" y="437" width="1" height="1"/><rect x="24" y="439" width="1" height="1"/><rect x="24" y="441" width="1" height="1"/><rect x="24" y="443" width="1" height="1"/><rect x="24" y="445" width="1" height="1"/><rect x="24" y="447" width="1" height="1"/><rect x="24" y="449" width="1" height="1"/><rect x="24" y="451" width="1" height="1"/><rect x="24" y="453" width="1" height="1"/><rect x="24" y="455" width="1" height="1"/><rect x="24" y="457" width="1" height="1"/><rect x="24" y="459" width="1" height="1"/><rect x="24" y="461" width="1" height="1"/><rect x="24" y="463" width="1" height="1"/><rect x="24" y="465" width="1" height="1"/><rect x="24" y="467" width="1" height="1"/><rect x="24" y="469" width="1" height="1"/><rect x="24" y="471" width="1" height="1"/><rect x="24" y="473" width="1" height="1"/><rect x="24" y="475" width="1" height="1"/><rect x="24" y="477" width="1" height="1"/><rect x="24" y="479" width="1" height="1"/><rect x="24" y="481" width="1" height="1"/><rect x="24" y="483" width="1" height="1"/><rect x="24" y="485" width="1" height="1"/><rect x="24" y="487" width="1" height="1"/><rect x="24" y="489" width="1" height="1"/><rect x="24" y="491" width="1" height="1"/><rect x="24" y="493" width="1" height="1"/><rect x="24" y="495" width="1" height="1"/><rect x="24" y="497" width="1" height="1"/><rect x="24" y="499" width="1" height="1"/><rect x="24" y="501" width="1" height="1"/><rect x="24" y="503" width="1" height="1"/><rect x="24" y="505" width="1" height="1"/><rect x="24" y="507" width="1" height="1"/><rect x="24" y="509" width="1" height="1"/><rect x="24" y="511" width="1" height="1"/><rect x="24" y="513" width="1" height="1"/><rect x="24" y="515" width="1" height="1"/><rect x="24" y="517" width="1" height="1"/><rect x="24" y="519" width="1" height="1"/><rect x="24" y="521" width="1" height="1"/><rect x="24" y="523" width="1" height="1"/><rect x="24" y="525" width="1" height="1"/><rect x="24" y="527" width="1" height="1"/><rect x="24" y="529" width="1" height="1"/><rect x="24" y="531" width="1" height="1"/><rect x="24" y="533" width="1" height="1"/><rect x="24" y="535" width="1" height="1"/><rect x="24" y="537" width="1" height="1"/><rect x="24" y="539" width="1" height="1"/><rect x="24" y="541" width="1" height="1"/><rect x="24" y="543" width="1" height="1"/><rect x="24" y="545" width="1" height="1"/><rect x="24" y="547" width="1" height="1"/><rect x="24" y="549" width="1" height="1"/><rect x="24" y="551" width="1" height="1"/><rect x="24" y="553" width="1" height="1"/><rect x="24" y="555" width="1" height="1"/><rect x="24" y="557" width="1" height="1"/><rect x="24" y="559" width="1" height="1"/><rect x="24" y="561" width="1" height="1"/><rect x="24" y="563" width="1" height="1"/><rect x="24" y="565" width="1" height="1"/><rect x="24" y="567" width="1" height="1"/><rect x="24" y="569" width="1" height="1"/><rect x="24" y="571" width="1" height="1"/><rect x="24" y="573" width="1" height="1"/><rect x="24" y="575" width="1" height="1"/><rect x="24" y="577" width="1" height="1"/><rect x="24" y="579" width="1" height="1"/><rect x="24" y="581" width="1" height="1"/><rect x="24" y="583" width="1" height="1"/><rect x="24" y="585" width="1" height="1"/><rect x="24" y="587" width="1" height="1"/><rect x="24" y="589" width="1" height="1"/><rect x="24" y="591" width="1" height="1"/><rect x="24" y="593" width="1" height="1"/><rect x="24" y="595" width="1" height="1"/><rect x="24" y="597" width="1" height="1"/><rect x="24" y="599" width="1" height="1"/><rect x="24" y="601" width="1" height="1"/><rect x="24" y="603" width="1" height="1"/><rect x="24" y="605" width="1" height="1"/><rect x="24" y="607" width="1" height="1"/><rect x="24" y="609" width="1" height="1"/><rect x="24" y="611" width="1" height="1"/><rect x="24" y="613" width="1" height="1"/><rect x="24" y="615" width="1" height="1"/><rect x="24" y="617" width="1" height="1"/><rect x="24" y="619" width="1" height="1"/><rect x="24" y="621" width="1" height="1"/><rect x="24" y="623" width="1" height="1"/><rect x="24" y="625" width="1" height="1"/></g></svg>
<svg class="a" style="left:0;top:0" width="222" height="645" viewBox="0 0 222 645"><path d="M199.3 65.6 L203 62 L206.7 65.6" fill="none" stroke="#555" stroke-width="2"/><path d="M199.3 610.6 L203 614.2 L206.7 610.6" fill="none" stroke="#555" stroke-width="2"/><rect x="197.5" y="74.5" width="12" height="527" rx="6" fill="none" stroke="#6a6a6a" stroke-width="1"/><rect x="198.5" y="75.5" width="10" height="525" rx="5" fill="none" stroke="#868686" stroke-width="1"/><rect x="200" y="77" width="6.5" height="144" rx="3.25" fill="#3a3a3a"/><path d="M29.6 630.3 L26 634 L29.6 637.7" fill="none" stroke="#555" stroke-width="2"/><path d="M179.9 630.3 L183.5 634 L179.9 637.7" fill="none" stroke="#555" stroke-width="2"/><rect x="36.5" y="628.5" width="134" height="11" rx="5.5" fill="none" stroke="#6a6a6a" stroke-width="1"/><rect x="37.5" y="629.5" width="132" height="9" rx="4.5" fill="none" stroke="#868686" stroke-width="1"/><rect x="38.5" y="631" width="59.5" height="6" rx="3" fill="#3a3a3a"/></svg>
<svg class="a" style="left:1440px;top:650px" width="60" height="25" viewBox="1440 650 60 25"><path d="M1450 670 V661.5 Q1450 658 1453.5 658 H1457 V661.2 H1454.2 Q1453.5 661.2 1453.5 662 V662.3 H1456.6 V664.6 H1453.5 V670 Z" fill="#b38be6"/><path d="M1458.5 670 V661 Q1458.5 658 1461.5 658 H1472 Q1475 658 1475 661 V670 H1471.7 V661.3 H1468.4 V670 H1465 V661.3 H1461.9 V670 Z" fill="#66ba92"/><rect x="1480.6" y="658.5" width="7.8" height="8.6" rx="1" fill="none" stroke="#bdbdbd" stroke-width="1"/><path d="M1489.5 660.5 H1490.5 V669.6 H1482.7 V668" fill="none" stroke="#bdbdbd" stroke-width="1"/><path d="M1482 660.8H1487M1482 663H1487M1482 665.3H1487" stroke="#999" stroke-width="1"/></svg>
<div class="a" style="left:215px;top:338px;width:2px;height:2px;border-radius:1px;background:#f2f2f2"></div>
<div class="a" style="left:215px;top:341px;width:2px;height:2px;border-radius:1px;background:#f2f2f2"></div>
<div class="a" style="left:215px;top:344px;width:2px;height:2px;border-radius:1px;background:#f2f2f2"></div>
<div class="a" style="left:215px;top:347px;width:2px;height:2px;border-radius:1px;background:#f2f2f2"></div>
<div class="a" style="left:215px;top:350px;width:2px;height:2px;border-radius:1px;background:#f2f2f2"></div>
<div class="a" style="left:221px;top:49px;width:290px;height:593px"></div>
<div class="a" style="left:221px;top:49px;width:1290px;height:593px;background:#e5e5e5;border-radius:3px;overflow:hidden">
<div class="item" style="left:25px;top:25px"><svg class="ico" width="64" height="64" viewBox="0 0 64 64">
<rect x="0" y="0" width="64" height="64" fill="url(#fbg)"/>
<path d="M1 21 L21 61 L10 61 L1 42 Z" fill="url(#fsh)"/>
<path d="M1 15.5 L41.6 2.1 L46 8 L22 20 L22 61 L1 20 Z" fill="url(#fw)"/>
<path d="M3 15 L41.6 2.1 L46 8" stroke="#ffffff" stroke-width="1" stroke-dasharray="1 1.5" fill="none"/>
<path d="M1.2 16 L1.2 20.5 L21 61" stroke="#b0733a" stroke-width="1.1" fill="none"/>
<path d="M1 15.5 L1.8 15.5 L1.5 20" stroke="#e0b060" stroke-width="1" fill="none"/>
<path d="M21.6 61 L21.6 21 Q21.9 16.5 25.3 14.4 L36.4 9 L40.5 10.6 L63 1 L63 37.8 Z" fill="url(#fy)"/>
<path d="M21.6 60 L21.6 21 Q21.9 16.5 25.3 14.4" stroke="#c8934e" stroke-width="1" fill="none"/>
<path d="M0.5 64 L0.5 0.5 L64 0.5" stroke="#3e3e3e" stroke-width="1" fill="none"/>
<path d="M0 63.5 L63.5 63.5 L63.5 0" stroke="#a8a8a8" stroke-width="1" fill="none"/>
</svg><div class="lbl">!Vorlagen-Prozesse</div></div>
<div class="item" style="left:244px;top:25px"><svg class="ico" width="64" height="64" viewBox="0 0 64 64">
<rect x="0" y="0" width="64" height="64" fill="url(#fbg)"/>
<path d="M1 21 L21 61 L10 61 L1 42 Z" fill="url(#fsh)"/>
<path d="M1 15.5 L41.6 2.1 L46 8 L22 20 L22 61 L1 20 Z" fill="url(#fw)"/>
<path d="M3 15 L41.6 2.1 L46 8" stroke="#ffffff" stroke-width="1" stroke-dasharray="1 1.5" fill="none"/>
<path d="M1.2 16 L1.2 20.5 L21 61" stroke="#b0733a" stroke-width="1.1" fill="none"/>
<path d="M1 15.5 L1.8 15.5 L1.5 20" stroke="#e0b060" stroke-width="1" fill="none"/>
<path d="M21.6 61 L21.6 21 Q21.9 16.5 25.3 14.4 L36.4 9 L40.5 10.6 L63 1 L63 37.8 Z" fill="url(#fy)"/>
<path d="M21.6 60 L21.6 21 Q21.9 16.5 25.3 14.4" stroke="#c8934e" stroke-width="1" fill="none"/>
<path d="M0.5 64 L0.5 0.5 L64 0.5" stroke="#3e3e3e" stroke-width="1" fill="none"/>
<path d="M0 63.5 L63.5 63.5 L63.5 0" stroke="#a8a8a8" stroke-width="1" fill="none"/>
</svg><div class="lbl">Braun</div></div>
<div class="item" style="left:463px;top:25px"><svg class="ico" width="64" height="64" viewBox="0 0 64 64">
<rect x="0" y="0" width="64" height="64" fill="url(#fbg)"/>
<path d="M1 21 L21 61 L10 61 L1 42 Z" fill="url(#fsh)"/>
<path d="M1 15.5 L41.6 2.1 L46 8 L22 20 L22 61 L1 20 Z" fill="url(#fw)"/>
<path d="M3 15 L41.6 2.1 L46 8" stroke="#ffffff" stroke-width="1" stroke-dasharray="1 1.5" fill="none"/>
<path d="M1.2 16 L1.2 20.5 L21 61" stroke="#b0733a" stroke-width="1.1" fill="none"/>
<path d="M1 15.5 L1.8 15.5 L1.5 20" stroke="#e0b060" stroke-width="1" fill="none"/>
<path d="M21.6 61 L21.6 21 Q21.9 16.5 25.3 14.4 L36.4 9 L40.5 10.6 L63 1 L63 37.8 Z" fill="url(#fy)"/>
<path d="M21.6 60 L21.6 21 Q21.9 16.5 25.3 14.4" stroke="#c8934e" stroke-width="1" fill="none"/>
<path d="M0.5 64 L0.5 0.5 L64 0.5" stroke="#3e3e3e" stroke-width="1" fill="none"/>
<path d="M0 63.5 L63.5 63.5 L63.5 0" stroke="#a8a8a8" stroke-width="1" fill="none"/>
</svg><div class="lbl">BraunT</div></div>
<div class="item" style="left:682px;top:25px"><svg class="ico" width="64" height="64" viewBox="0 0 64 64">
<rect x="0" y="0" width="64" height="64" fill="url(#fbg)"/>
<path d="M1 21 L21 61 L10 61 L1 42 Z" fill="url(#fsh)"/>
<path d="M1 15.5 L41.6 2.1 L46 8 L22 20 L22 61 L1 20 Z" fill="url(#fw)"/>
<path d="M3 15 L41.6 2.1 L46 8" stroke="#ffffff" stroke-width="1" stroke-dasharray="1 1.5" fill="none"/>
<path d="M1.2 16 L1.2 20.5 L21 61" stroke="#b0733a" stroke-width="1.1" fill="none"/>
<path d="M1 15.5 L1.8 15.5 L1.5 20" stroke="#e0b060" stroke-width="1" fill="none"/>
<path d="M21.6 61 L21.6 21 Q21.9 16.5 25.3 14.4 L36.4 9 L40.5 10.6 L63 1 L63 37.8 Z" fill="url(#fy)"/>
<path d="M21.6 60 L21.6 21 Q21.9 16.5 25.3 14.4" stroke="#c8934e" stroke-width="1" fill="none"/>
<path d="M0.5 64 L0.5 0.5 L64 0.5" stroke="#3e3e3e" stroke-width="1" fill="none"/>
<path d="M0 63.5 L63.5 63.5 L63.5 0" stroke="#a8a8a8" stroke-width="1" fill="none"/>
</svg><div class="lbl">EMail-Vorlagen</div></div>
<div class="item" style="left:901px;top:25px"><svg class="ico" width="64" height="64" viewBox="0 0 64 64">
<rect x="0" y="0" width="64" height="64" fill="url(#fbg)"/>
<path d="M1 21 L21 61 L10 61 L1 42 Z" fill="url(#fsh)"/>
<path d="M1 15.5 L41.6 2.1 L46 8 L22 20 L22 61 L1 20 Z" fill="url(#fw)"/>
<path d="M3 15 L41.6 2.1 L46 8" stroke="#ffffff" stroke-width="1" stroke-dasharray="1 1.5" fill="none"/>
<path d="M1.2 16 L1.2 20.5 L21 61" stroke="#b0733a" stroke-width="1.1" fill="none"/>
<path d="M1 15.5 L1.8 15.5 L1.5 20" stroke="#e0b060" stroke-width="1" fill="none"/>
<path d="M21.6 61 L21.6 21 Q21.9 16.5 25.3 14.4 L36.4 9 L40.5 10.6 L63 1 L63 37.8 Z" fill="url(#fy)"/>
<path d="M21.6 60 L21.6 21 Q21.9 16.5 25.3 14.4" stroke="#c8934e" stroke-width="1" fill="none"/>
<path d="M0.5 64 L0.5 0.5 L64 0.5" stroke="#3e3e3e" stroke-width="1" fill="none"/>
<path d="M0 63.5 L63.5 63.5 L63.5 0" stroke="#a8a8a8" stroke-width="1" fill="none"/>
</svg><div class="lbl">Events</div></div>
<div class="item" style="left:25px;top:189px"><svg class="ico" width="64" height="64" viewBox="0 0 64 64">
<rect x="0" y="0" width="64" height="64" fill="url(#fbg)"/>
<path d="M1 21 L21 61 L10 61 L1 42 Z" fill="url(#fsh)"/>
<path d="M1 15.5 L41.6 2.1 L46 8 L22 20 L22 61 L1 20 Z" fill="url(#fw)"/>
<path d="M3 15 L41.6 2.1 L46 8" stroke="#ffffff" stroke-width="1" stroke-dasharray="1 1.5" fill="none"/>
<path d="M1.2 16 L1.2 20.5 L21 61" stroke="#b0733a" stroke-width="1.1" fill="none"/>
<path d="M1 15.5 L1.8 15.5 L1.5 20" stroke="#e0b060" stroke-width="1" fill="none"/>
<path d="M21.6 61 L21.6 21 Q21.9 16.5 25.3 14.4 L36.4 9 L40.5 10.6 L63 1 L63 37.8 Z" fill="url(#fy)"/>
<path d="M21.6 60 L21.6 21 Q21.9 16.5 25.3 14.4" stroke="#c8934e" stroke-width="1" fill="none"/>
<path d="M0.5 64 L0.5 0.5 L64 0.5" stroke="#3e3e3e" stroke-width="1" fill="none"/>
<path d="M0 63.5 L63.5 63.5 L63.5 0" stroke="#a8a8a8" stroke-width="1" fill="none"/>
</svg><div class="lbl">FALC.World</div></div>
<div class="item" style="left:244px;top:189px"><svg class="ico" width="64" height="64" viewBox="0 0 64 64">
<rect x="0" y="0" width="64" height="64" fill="url(#fbg)"/>
<path d="M1 21 L21 61 L10 61 L1 42 Z" fill="url(#fsh)"/>
<path d="M1 15.5 L41.6 2.1 L46 8 L22 20 L22 61 L1 20 Z" fill="url(#fw)"/>
<path d="M3 15 L41.6 2.1 L46 8" stroke="#ffffff" stroke-width="1" stroke-dasharray="1 1.5" fill="none"/>
<path d="M1.2 16 L1.2 20.5 L21 61" stroke="#b0733a" stroke-width="1.1" fill="none"/>
<path d="M1 15.5 L1.8 15.5 L1.5 20" stroke="#e0b060" stroke-width="1" fill="none"/>
<path d="M21.6 61 L21.6 21 Q21.9 16.5 25.3 14.4 L36.4 9 L40.5 10.6 L63 1 L63 37.8 Z" fill="url(#fy)"/>
<path d="M21.6 60 L21.6 21 Q21.9 16.5 25.3 14.4" stroke="#c8934e" stroke-width="1" fill="none"/>
<path d="M0.5 64 L0.5 0.5 L64 0.5" stroke="#3e3e3e" stroke-width="1" fill="none"/>
<path d="M0 63.5 L63.5 63.5 L63.5 0" stroke="#a8a8a8" stroke-width="1" fill="none"/>
</svg><div class="lbl">FALCFinance</div></div>
<div class="item" style="left:463px;top:189px"><svg class="ico" width="64" height="64" viewBox="0 0 64 64">
<rect x="0" y="0" width="64" height="64" fill="url(#fbg)"/>
<path d="M1 21 L21 61 L10 61 L1 42 Z" fill="url(#fsh)"/>
<path d="M1 15.5 L41.6 2.1 L46 8 L22 20 L22 61 L1 20 Z" fill="url(#fw)"/>
<path d="M3 15 L41.6 2.1 L46 8" stroke="#ffffff" stroke-width="1" stroke-dasharray="1 1.5" fill="none"/>
<path d="M1.2 16 L1.2 20.5 L21 61" stroke="#b0733a" stroke-width="1.1" fill="none"/>
<path d="M1 15.5 L1.8 15.5 L1.5 20" stroke="#e0b060" stroke-width="1" fill="none"/>
<path d="M21.6 61 L21.6 21 Q21.9 16.5 25.3 14.4 L36.4 9 L40.5 10.6 L63 1 L63 37.8 Z" fill="url(#fy)"/>
<path d="M21.6 60 L21.6 21 Q21.9 16.5 25.3 14.4" stroke="#c8934e" stroke-width="1" fill="none"/>
<path d="M0.5 64 L0.5 0.5 L64 0.5" stroke="#3e3e3e" stroke-width="1" fill="none"/>
<path d="M0 63.5 L63.5 63.5 L63.5 0" stroke="#a8a8a8" stroke-width="1" fill="none"/>
</svg><div class="lbl">Helge_Horn</div></div>
<div class="item" style="left:682px;top:189px"><svg class="ico" width="64" height="64" viewBox="0 0 64 64">
<rect x="0" y="0" width="64" height="64" fill="url(#fbg)"/>
<path d="M1 21 L21 61 L10 61 L1 42 Z" fill="url(#fsh)"/>
<path d="M1 15.5 L41.6 2.1 L46 8 L22 20 L22 61 L1 20 Z" fill="url(#fw)"/>
<path d="M3 15 L41.6 2.1 L46 8" stroke="#ffffff" stroke-width="1" stroke-dasharray="1 1.5" fill="none"/>
<path d="M1.2 16 L1.2 20.5 L21 61" stroke="#b0733a" stroke-width="1.1" fill="none"/>
<path d="M1 15.5 L1.8 15.5 L1.5 20" stroke="#e0b060" stroke-width="1" fill="none"/>
<path d="M21.6 61 L21.6 21 Q21.9 16.5 25.3 14.4 L36.4 9 L40.5 10.6 L63 1 L63 37.8 Z" fill="url(#fy)"/>
<path d="M21.6 60 L21.6 21 Q21.9 16.5 25.3 14.4" stroke="#c8934e" stroke-width="1" fill="none"/>
<path d="M0.5 64 L0.5 0.5 L64 0.5" stroke="#3e3e3e" stroke-width="1" fill="none"/>
<path d="M0 63.5 L63.5 63.5 L63.5 0" stroke="#a8a8a8" stroke-width="1" fill="none"/>
</svg><div class="lbl">Icon-Aushang</div></div>
<div class="item" style="left:901px;top:189px"><svg class="ico" width="64" height="64" viewBox="0 0 64 64">
<rect x="0" y="0" width="64" height="64" fill="url(#fbg)"/>
<path d="M1 21 L21 61 L10 61 L1 42 Z" fill="url(#fsh)"/>
<path d="M1 15.5 L41.6 2.1 L46 8 L22 20 L22 61 L1 20 Z" fill="url(#fw)"/>
<path d="M3 15 L41.6 2.1 L46 8" stroke="#ffffff" stroke-width="1" stroke-dasharray="1 1.5" fill="none"/>
<path d="M1.2 16 L1.2 20.5 L21 61" stroke="#b0733a" stroke-width="1.1" fill="none"/>
<path d="M1 15.5 L1.8 15.5 L1.5 20" stroke="#e0b060" stroke-width="1" fill="none"/>
<path d="M21.6 61 L21.6 21 Q21.9 16.5 25.3 14.4 L36.4 9 L40.5 10.6 L63 1 L63 37.8 Z" fill="url(#fy)"/>
<path d="M21.6 60 L21.6 21 Q21.9 16.5 25.3 14.4" stroke="#c8934e" stroke-width="1" fill="none"/>
<path d="M0.5 64 L0.5 0.5 L64 0.5" stroke="#3e3e3e" stroke-width="1" fill="none"/>
<path d="M0 63.5 L63.5 63.5 L63.5 0" stroke="#a8a8a8" stroke-width="1" fill="none"/>
</svg><div class="lbl">IT-Abteilung</div></div>
<div class="item" style="left:25px;top:352px"><svg class="ico" width="64" height="64" viewBox="0 0 64 64">
<rect x="0" y="0" width="64" height="64" fill="url(#fbg)"/>
<path d="M1 21 L21 61 L10 61 L1 42 Z" fill="url(#fsh)"/>
<path d="M1 15.5 L41.6 2.1 L46 8 L22 20 L22 61 L1 20 Z" fill="url(#fw)"/>
<path d="M3 15 L41.6 2.1 L46 8" stroke="#ffffff" stroke-width="1" stroke-dasharray="1 1.5" fill="none"/>
<path d="M1.2 16 L1.2 20.5 L21 61" stroke="#b0733a" stroke-width="1.1" fill="none"/>
<path d="M1 15.5 L1.8 15.5 L1.5 20" stroke="#e0b060" stroke-width="1" fill="none"/>
<path d="M21.6 61 L21.6 21 Q21.9 16.5 25.3 14.4 L36.4 9 L40.5 10.6 L63 1 L63 37.8 Z" fill="url(#fy)"/>
<path d="M21.6 60 L21.6 21 Q21.9 16.5 25.3 14.4" stroke="#c8934e" stroke-width="1" fill="none"/>
<path d="M0.5 64 L0.5 0.5 L64 0.5" stroke="#3e3e3e" stroke-width="1" fill="none"/>
<path d="M0 63.5 L63.5 63.5 L63.5 0" stroke="#a8a8a8" stroke-width="1" fill="none"/>
</svg><div class="lbl">Marketing</div></div>
<div class="item" style="left:244px;top:352px"><svg class="ico" width="64" height="64" viewBox="0 0 64 64">
<rect x="0" y="0" width="64" height="64" fill="url(#fbg)"/>
<path d="M1 21 L21 61 L10 61 L1 42 Z" fill="url(#fsh)"/>
<path d="M1 15.5 L41.6 2.1 L46 8 L22 20 L22 61 L1 20 Z" fill="url(#fw)"/>
<path d="M3 15 L41.6 2.1 L46 8" stroke="#ffffff" stroke-width="1" stroke-dasharray="1 1.5" fill="none"/>
<path d="M1.2 16 L1.2 20.5 L21 61" stroke="#b0733a" stroke-width="1.1" fill="none"/>
<path d="M1 15.5 L1.8 15.5 L1.5 20" stroke="#e0b060" stroke-width="1" fill="none"/>
<path d="M21.6 61 L21.6 21 Q21.9 16.5 25.3 14.4 L36.4 9 L40.5 10.6 L63 1 L63 37.8 Z" fill="url(#fy)"/>
<path d="M21.6 60 L21.6 21 Q21.9 16.5 25.3 14.4" stroke="#c8934e" stroke-width="1" fill="none"/>
<path d="M0.5 64 L0.5 0.5 L64 0.5" stroke="#3e3e3e" stroke-width="1" fill="none"/>
<path d="M0 63.5 L63.5 63.5 L63.5 0" stroke="#a8a8a8" stroke-width="1" fill="none"/>
</svg><div class="lbl">Mein_Ordner</div></div>
<div class="item" style="left:463px;top:352px"><svg class="ico" width="64" height="64" viewBox="0 0 64 64">
<rect x="0" y="0" width="64" height="64" fill="url(#fbg)"/>
<path d="M1 21 L21 61 L10 61 L1 42 Z" fill="url(#fsh)"/>
<path d="M1 15.5 L41.6 2.1 L46 8 L22 20 L22 61 L1 20 Z" fill="url(#fw)"/>
<path d="M3 15 L41.6 2.1 L46 8" stroke="#ffffff" stroke-width="1" stroke-dasharray="1 1.5" fill="none"/>
<path d="M1.2 16 L1.2 20.5 L21 61" stroke="#b0733a" stroke-width="1.1" fill="none"/>
<path d="M1 15.5 L1.8 15.5 L1.5 20" stroke="#e0b060" stroke-width="1" fill="none"/>
<path d="M21.6 61 L21.6 21 Q21.9 16.5 25.3 14.4 L36.4 9 L40.5 10.6 L63 1 L63 37.8 Z" fill="url(#fy)"/>
<path d="M21.6 60 L21.6 21 Q21.9 16.5 25.3 14.4" stroke="#c8934e" stroke-width="1" fill="none"/>
<path d="M0.5 64 L0.5 0.5 L64 0.5" stroke="#3e3e3e" stroke-width="1" fill="none"/>
<path d="M0 63.5 L63.5 63.5 L63.5 0" stroke="#a8a8a8" stroke-width="1" fill="none"/>
</svg><div class="lbl">Muelheim</div></div>
<div class="item" style="left:682px;top:352px"><svg class="ico" width="64" height="64" viewBox="0 0 64 64">
<rect x="0" y="0" width="64" height="64" fill="url(#fbg)"/>
<path d="M1 21 L21 61 L10 61 L1 42 Z" fill="url(#fsh)"/>
<path d="M1 15.5 L41.6 2.1 L46 8 L22 20 L22 61 L1 20 Z" fill="url(#fw)"/>
<path d="M3 15 L41.6 2.1 L46 8" stroke="#ffffff" stroke-width="1" stroke-dasharray="1 1.5" fill="none"/>
<path d="M1.2 16 L1.2 20.5 L21 61" stroke="#b0733a" stroke-width="1.1" fill="none"/>
<path d="M1 15.5 L1.8 15.5 L1.5 20" stroke="#e0b060" stroke-width="1" fill="none"/>
<path d="M21.6 61 L21.6 21 Q21.9 16.5 25.3 14.4 L36.4 9 L40.5 10.6 L63 1 L63 37.8 Z" fill="url(#fy)"/>
<path d="M21.6 60 L21.6 21 Q21.9 16.5 25.3 14.4" stroke="#c8934e" stroke-width="1" fill="none"/>
<path d="M0.5 64 L0.5 0.5 L64 0.5" stroke="#3e3e3e" stroke-width="1" fill="none"/>
<path d="M0 63.5 L63.5 63.5 L63.5 0" stroke="#a8a8a8" stroke-width="1" fill="none"/>
</svg><div class="lbl">Pack</div></div>
<div class="item" style="left:901px;top:352px"><svg class="ico" width="64" height="64" viewBox="0 0 64 64">
<rect x="0" y="0" width="64" height="64" fill="url(#fbg)"/>
<path d="M1 21 L21 61 L10 61 L1 42 Z" fill="url(#fsh)"/>
<path d="M1 15.5 L41.6 2.1 L46 8 L22 20 L22 61 L1 20 Z" fill="url(#fw)"/>
<path d="M3 15 L41.6 2.1 L46 8" stroke="#ffffff" stroke-width="1" stroke-dasharray="1 1.5" fill="none"/>
<path d="M1.2 16 L1.2 20.5 L21 61" stroke="#b0733a" stroke-width="1.1" fill="none"/>
<path d="M1 15.5 L1.8 15.5 L1.5 20" stroke="#e0b060" stroke-width="1" fill="none"/>
<path d="M21.6 61 L21.6 21 Q21.9 16.5 25.3 14.4 L36.4 9 L40.5 10.6 L63 1 L63 37.8 Z" fill="url(#fy)"/>
<path d="M21.6 60 L21.6 21 Q21.9 16.5 25.3 14.4" stroke="#c8934e" stroke-width="1" fill="none"/>
<path d="M0.5 64 L0.5 0.5 L64 0.5" stroke="#3e3e3e" stroke-width="1" fill="none"/>
<path d="M0 63.5 L63.5 63.5 L63.5 0" stroke="#a8a8a8" stroke-width="1" fill="none"/>
</svg><div class="lbl">Ridder</div></div>
<div class="item" style="left:25px;top:516px"><svg class="ico" width="64" height="64" viewBox="0 0 64 64">
<rect x="0" y="0" width="64" height="64" fill="url(#fbg)"/>
<path d="M1 21 L21 61 L10 61 L1 42 Z" fill="url(#fsh)"/>
<path d="M1 15.5 L41.6 2.1 L46 8 L22 20 L22 61 L1 20 Z" fill="url(#fw)"/>
<path d="M3 15 L41.6 2.1 L46 8" stroke="#ffffff" stroke-width="1" stroke-dasharray="1 1.5" fill="none"/>
<path d="M1.2 16 L1.2 20.5 L21 61" stroke="#b0733a" stroke-width="1.1" fill="none"/>
<path d="M1 15.5 L1.8 15.5 L1.5 20" stroke="#e0b060" stroke-width="1" fill="none"/>
<path d="M21.6 61 L21.6 21 Q21.9 16.5 25.3 14.4 L36.4 9 L40.5 10.6 L63 1 L63 37.8 Z" fill="url(#fy)"/>
<path d="M21.6 60 L21.6 21 Q21.9 16.5 25.3 14.4" stroke="#c8934e" stroke-width="1" fill="none"/>
<path d="M0.5 64 L0.5 0.5 L64 0.5" stroke="#3e3e3e" stroke-width="1" fill="none"/>
<path d="M0 63.5 L63.5 63.5 L63.5 0" stroke="#a8a8a8" stroke-width="1" fill="none"/>
</svg><div class="lbl"></div></div>
<div class="item" style="left:244px;top:516px"><svg class="ico" width="64" height="64" viewBox="0 0 64 64">
<rect x="0" y="0" width="64" height="64" fill="url(#fbg)"/>
<path d="M1 21 L21 61 L10 61 L1 42 Z" fill="url(#fsh)"/>
<path d="M1 15.5 L41.6 2.1 L46 8 L22 20 L22 61 L1 20 Z" fill="url(#fw)"/>
<path d="M3 15 L41.6 2.1 L46 8" stroke="#ffffff" stroke-width="1" stroke-dasharray="1 1.5" fill="none"/>
<path d="M1.2 16 L1.2 20.5 L21 61" stroke="#b0733a" stroke-width="1.1" fill="none"/>
<path d="M1 15.5 L1.8 15.5 L1.5 20" stroke="#e0b060" stroke-width="1" fill="none"/>
<path d="M21.6 61 L21.6 21 Q21.9 16.5 25.3 14.4 L36.4 9 L40.5 10.6 L63 1 L63 37.8 Z" fill="url(#fy)"/>
<path d="M21.6 60 L21.6 21 Q21.9 16.5 25.3 14.4" stroke="#c8934e" stroke-width="1" fill="none"/>
<path d="M0.5 64 L0.5 0.5 L64 0.5" stroke="#3e3e3e" stroke-width="1" fill="none"/>
<path d="M0 63.5 L63.5 63.5 L63.5 0" stroke="#a8a8a8" stroke-width="1" fill="none"/>
</svg><div class="lbl"></div></div>
<div class="item" style="left:463px;top:516px"><svg class="ico" width="64" height="64" viewBox="0 0 64 64">
<rect x="0" y="0" width="64" height="64" fill="url(#fbg)"/>
<path d="M1 21 L21 61 L10 61 L1 42 Z" fill="url(#fsh)"/>
<path d="M1 15.5 L41.6 2.1 L46 8 L22 20 L22 61 L1 20 Z" fill="url(#fw)"/>
<path d="M3 15 L41.6 2.1 L46 8" stroke="#ffffff" stroke-width="1" stroke-dasharray="1 1.5" fill="none"/>
<path d="M1.2 16 L1.2 20.5 L21 61" stroke="#b0733a" stroke-width="1.1" fill="none"/>
<path d="M1 15.5 L1.8 15.5 L1.5 20" stroke="#e0b060" stroke-width="1" fill="none"/>
<path d="M21.6 61 L21.6 21 Q21.9 16.5 25.3 14.4 L36.4 9 L40.5 10.6 L63 1 L63 37.8 Z" fill="url(#fy)"/>
<path d="M21.6 60 L21.6 21 Q21.9 16.5 25.3 14.4" stroke="#c8934e" stroke-width="1" fill="none"/>
<path d="M0.5 64 L0.5 0.5 L64 0.5" stroke="#3e3e3e" stroke-width="1" fill="none"/>
<path d="M0 63.5 L63.5 63.5 L63.5 0" stroke="#a8a8a8" stroke-width="1" fill="none"/>
</svg><div class="lbl"></div></div>
<div class="item" style="left:682px;top:516px"><svg class="ico" width="64" height="64" viewBox="0 0 64 64">
<rect x="0" y="0" width="64" height="64" fill="url(#fbg)"/>
<path d="M1 21 L21 61 L10 61 L1 42 Z" fill="url(#fsh)"/>
<path d="M1 15.5 L41.6 2.1 L46 8 L22 20 L22 61 L1 20 Z" fill="url(#fw)"/>
<path d="M3 15 L41.6 2.1 L46 8" stroke="#ffffff" stroke-width="1" stroke-dasharray="1 1.5" fill="none"/>
<path d="M1.2 16 L1.2 20.5 L21 61" stroke="#b0733a" stroke-width="1.1" fill="none"/>
<path d="M1 15.5 L1.8 15.5 L1.5 20" stroke="#e0b060" stroke-width="1" fill="none"/>
<path d="M21.6 61 L21.6 21 Q21.9 16.5 25.3 14.4 L36.4 9 L40.5 10.6 L63 1 L63 37.8 Z" fill="url(#fy)"/>
<path d="M21.6 60 L21.6 21 Q21.9 16.5 25.3 14.4" stroke="#c8934e" stroke-width="1" fill="none"/>
<path d="M0.5 64 L0.5 0.5 L64 0.5" stroke="#3e3e3e" stroke-width="1" fill="none"/>
<path d="M0 63.5 L63.5 63.5 L63.5 0" stroke="#a8a8a8" stroke-width="1" fill="none"/>
</svg><div class="lbl"></div></div>
<div class="item" style="left:901px;top:516px"><svg class="ico" width="64" height="64" viewBox="0 0 64 64">
<rect x="0" y="0" width="64" height="64" fill="url(#fbg)"/>
<path d="M1 21 L21 61 L10 61 L1 42 Z" fill="url(#fsh)"/>
<path d="M1 15.5 L41.6 2.1 L46 8 L22 20 L22 61 L1 20 Z" fill="url(#fw)"/>
<path d="M3 15 L41.6 2.1 L46 8" stroke="#ffffff" stroke-width="1" stroke-dasharray="1 1.5" fill="none"/>
<path d="M1.2 16 L1.2 20.5 L21 61" stroke="#b0733a" stroke-width="1.1" fill="none"/>
<path d="M1 15.5 L1.8 15.5 L1.5 20" stroke="#e0b060" stroke-width="1" fill="none"/>
<path d="M21.6 61 L21.6 21 Q21.9 16.5 25.3 14.4 L36.4 9 L40.5 10.6 L63 1 L63 37.8 Z" fill="url(#fy)"/>
<path d="M21.6 60 L21.6 21 Q21.9 16.5 25.3 14.4" stroke="#c8934e" stroke-width="1" fill="none"/>
<path d="M0.5 64 L0.5 0.5 L64 0.5" stroke="#3e3e3e" stroke-width="1" fill="none"/>
<path d="M0 63.5 L63.5 63.5 L63.5 0" stroke="#a8a8a8" stroke-width="1" fill="none"/>
</svg><div class="lbl"></div></div>
</div>
<svg class="a" style="left:1490px;top:45px" width="25" height="600" viewBox="1490 45 25 600"><path d="M1499.3 60.6 L1503 57 L1506.7 60.6" fill="none" stroke="#6e6e6e" stroke-width="2"/><path d="M1499.3 630.4 L1503 634 L1506.7 630.4" fill="none" stroke="#6e6e6e" stroke-width="2"/><rect x="1497.5" y="69" width="12" height="552" rx="6" fill="none" stroke="#c6c6c6" stroke-width="1"/><rect x="1498.5" y="70" width="10" height="550" rx="5" fill="none" stroke="#f8f8f8" stroke-width="1"/><rect x="1500" y="72" width="6.6" height="81" rx="3.3" fill="#3c3c3c"/></svg>
<div class="a" style="left:11px;top:649px;width:200px;height:27px;border:1.5px solid #ededed;border-radius:2px"></div>
<svg class="a" style="left:189px;top:654px" width="16" height="16" viewBox="0 0 16 16"><circle cx="8" cy="8" r="8" fill="#535350"/><path d="M4.2 4.2L11.8 11.8M11.8 4.2L4.2 11.8" stroke="#3f3f3a" stroke-width="1.5"/></svg>
<div class="a" style="left:1224.5px;top:658px;font-size:13px;color:#c8c8c8;line-height:15px;letter-spacing:-0.25px"><span style="margin-left:-1px;letter-spacing:-1.6px">1</span><span style="margin-left:-0.5px;letter-spacing:-1.2px">1</span>3 Elemente - Größe: 99.82 MB</div>
<svg class="a" style="left:1413.7px;top:653.4px" width="17" height="17" viewBox="0 0 17 17"><circle cx="8.5" cy="8.5" r="7.3" fill="none" stroke="#eaeaea" stroke-width="1.6"/><rect x="7.6" y="7" width="1.8" height="6" fill="#fff"/><rect x="7.6" y="4" width="1.8" height="1.8" fill="#fff"/></svg>
<div class="a" style="left:1343px;top:2px;width:126px;height:49px;border:3px solid #f43d3d;box-shadow:0 3px 6px rgba(0,0,0,0.4)"></div>
<div class="a" style="left:1296px;top:6px;width:40px;height:40px;border-radius:50%;background:#f64242;box-shadow:0 3px 6px rgba(0,0,0,0.45);color:#fff;font-size:31px;line-height:42px;text-align:center;-webkit-text-stroke:0.5px #fff">4</div></body></html>
